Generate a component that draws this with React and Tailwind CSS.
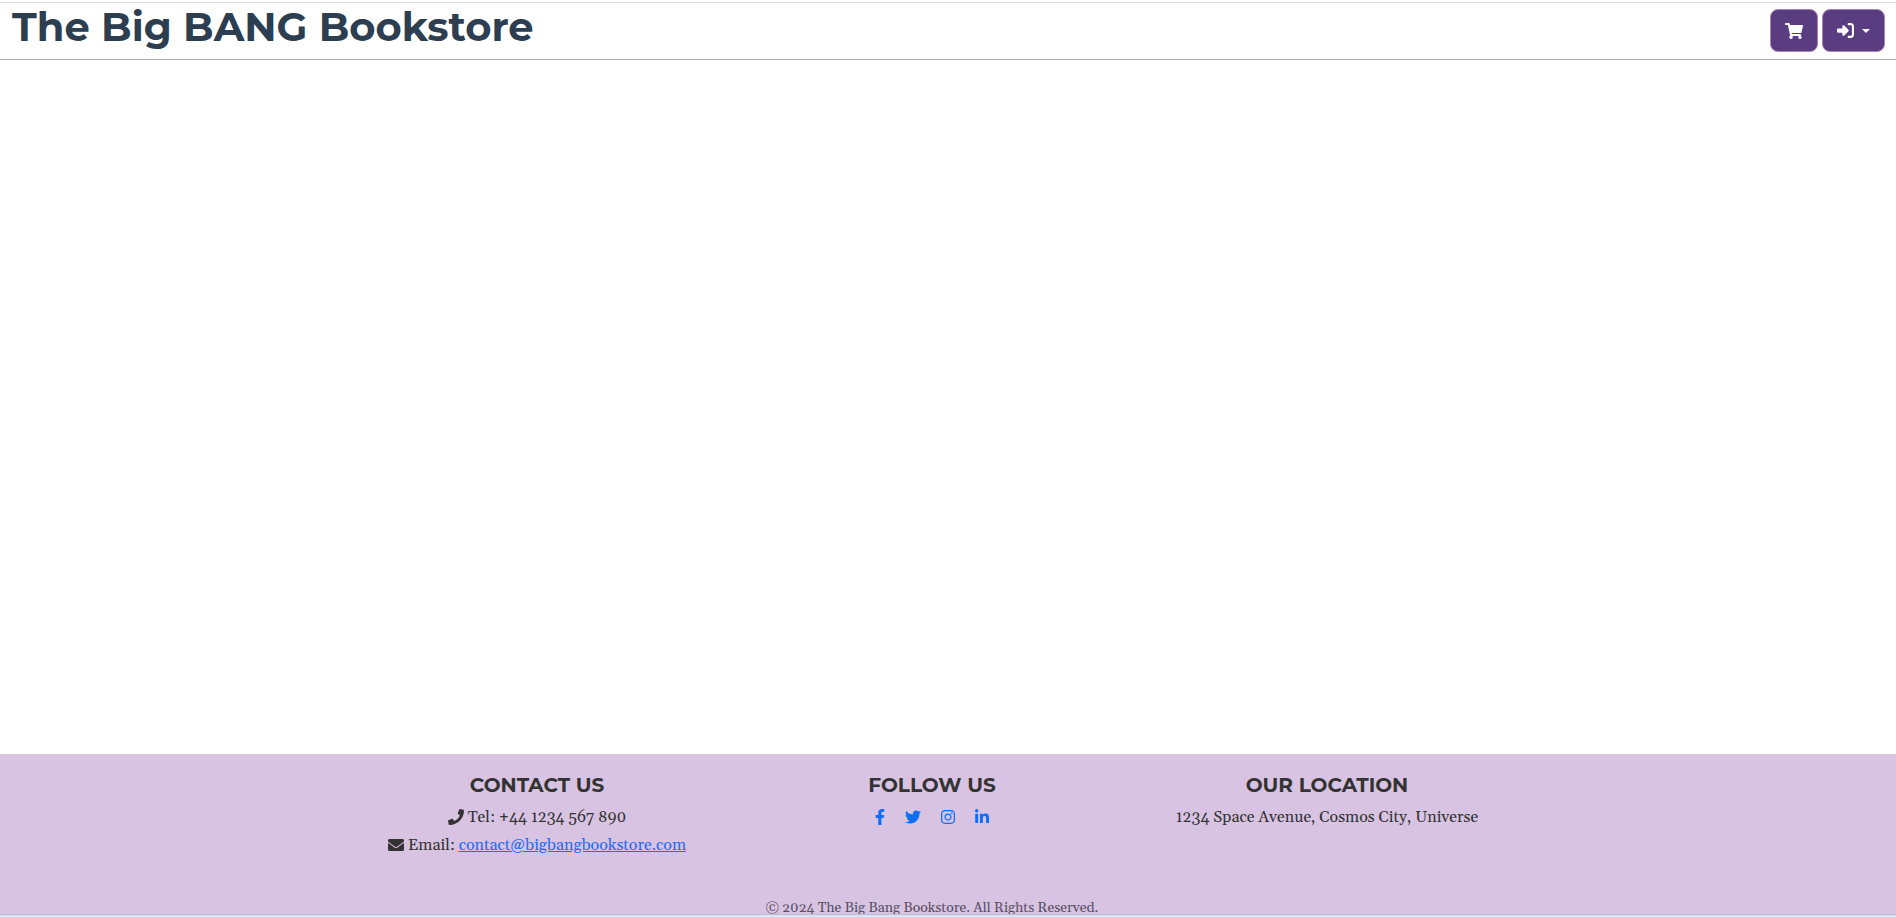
import {
  FaShoppingCart,
  FaPhone,
  FaEnvelope,
  FaFacebookF,
  FaTwitter,
  FaInstagram,
  FaLinkedinIn,
} from "react-icons/fa";
import { FaRightToBracket } from "react-icons/fa6";

const socials = [
  { name: "Facebook", Icon: FaFacebookF, width: "w-[10px]" },
  { name: "Twitter", Icon: FaTwitter, width: "w-4" },
  { name: "Instagram", Icon: FaInstagram, width: "w-[14px]" },
  { name: "LinkedIn", Icon: FaLinkedinIn, width: "w-[14px]" },
];

const headingFont = "font-['Montserrat','Inter',sans-serif]";
const actionButton =
  "flex h-[43px] items-center justify-center rounded-lg border border-[#ab83b4] bg-[#5a3d80] text-white";

function FooterColumn({ title, children }) {
  return (
    <section className="flex flex-col items-center">
      <h2 className={`${headingFont} mb-[6px] text-xl leading-6 font-bold uppercase`}>{title}</h2>
      {children}
    </section>
  );
}

export default function App() {
  return (
    <div className="flex h-screen flex-col overflow-hidden bg-white font-['Gelasio','Georgia','Liberation_Serif',serif] text-[#333333]">
      <header className="mt-[2px] flex h-[58px] shrink-0 items-start justify-between border-t border-b border-t-[#dfdfdf] border-b-[#b0b0b0] pt-[6px] pr-[11px] pl-3">
        <h1 className={`${headingFont} text-[40px] leading-9 font-bold text-[#2c3e50]`}>
          The Big BANG Bookstore
        </h1>
        <div className="flex gap-1">
          <button type="button" aria-label="Cart" className={`${actionButton} w-12`}>
            <FaShoppingCart className="h-4 w-[18px]" />
          </button>
          <button type="button" aria-label="Sign in" className={`${actionButton} w-[63px] gap-2`}>
            <FaRightToBracket className="size-[17px]" />
            <svg viewBox="0 0 8 4" className="h-1 w-2" fill="currentColor" aria-hidden="true">
              <path d="M0 0h8L4 4z" />
            </svg>
          </button>
        </div>
      </header>

      <main className="flex-1" />

      <footer className="h-40 shrink-0 overflow-hidden bg-[#d8c3e2] pt-[19px] pr-8">
        <div className="mx-auto grid max-w-[1185px] grid-cols-3 text-base leading-7">
          <FooterColumn title="Contact us">
            <p className="flex items-center gap-1">
              <FaPhone className="size-4" />
              Tel: +44 1234 567 890
            </p>
            <p className="flex items-center gap-1">
              <FaEnvelope className="size-4" />
              <span>
                Email:{" "}
                <a href="mailto:contact@bigbangbookstore.com" className="text-[#1f6cf5] underline">
                  contact@bigbangbookstore.com
                </a>
              </span>
            </p>
          </FooterColumn>
          <FooterColumn title="Follow us">
            <div className="flex h-7 items-center gap-5">
              {socials.map(({ name, Icon, width }) => (
                <a key={name} href="#" aria-label={name} className="text-[#0d6efd]">
                  <Icon className={`h-4 ${width}`} />
                </a>
              ))}
            </div>
          </FooterColumn>
          <FooterColumn title="Our location">
            <p>1234 Space Avenue, Cosmos City, Universe</p>
          </FooterColumn>
        </div>
        <p className="mt-[37px] text-center text-sm leading-6 text-[#5a4f62]">
          © 2024 The Big Bang Bookstore. All Rights Reserved.
        </p>
      </footer>
      <div className="h-[3px] shrink-0 border-t border-[#b5bdd8] bg-[#dde5f3]" />
    </div>
  );
}
